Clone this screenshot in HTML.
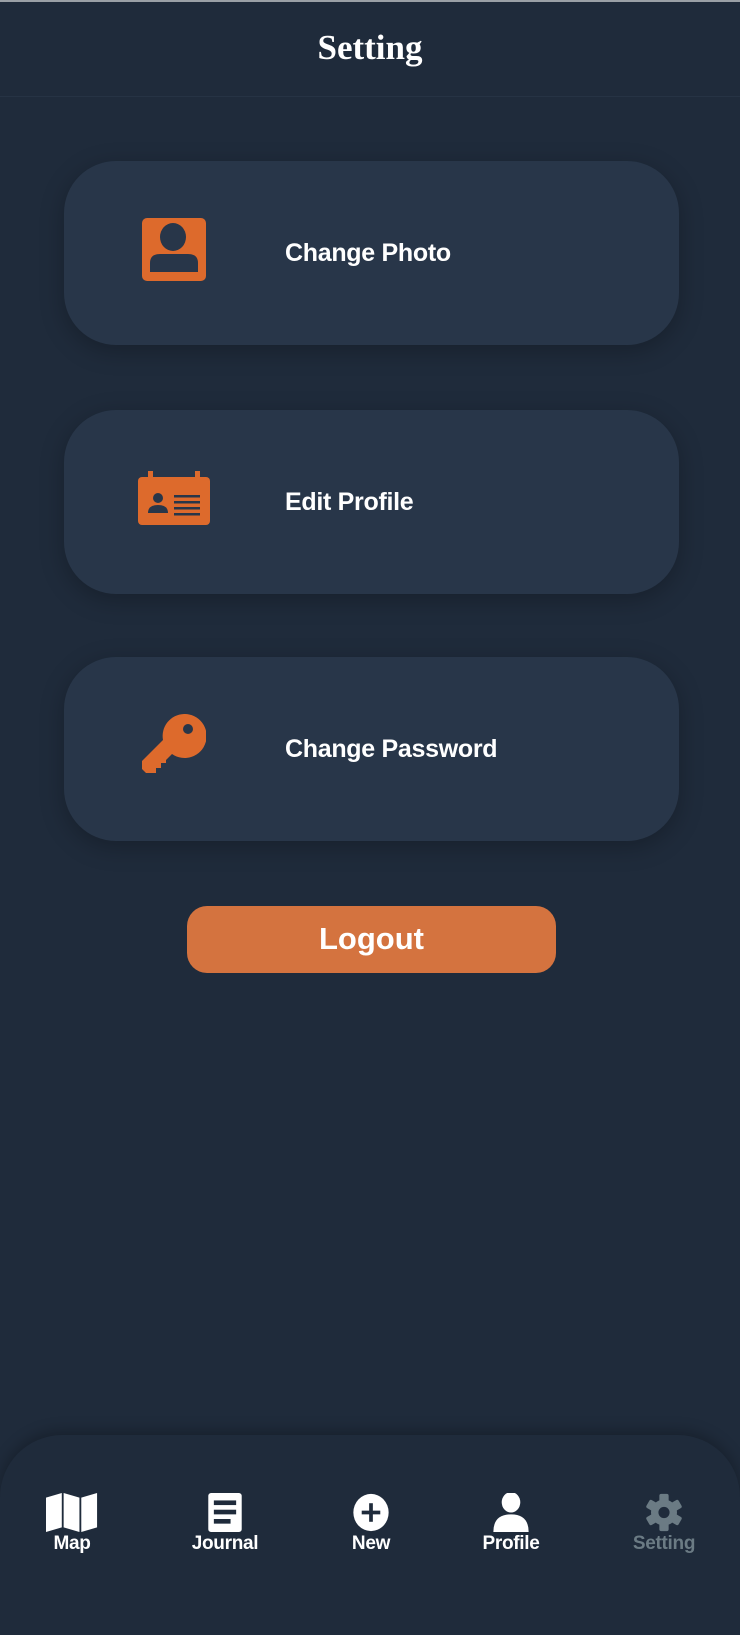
<!DOCTYPE html>
<html><head><meta charset="utf-8"><style>
*{margin:0;padding:0;box-sizing:border-box}
body{width:740px;height:1608px;background:#1f2b3b;font-family:"Liberation Sans",sans-serif;position:relative;overflow:hidden;color:#fff}
.top{position:absolute;left:0;top:0;width:740px;height:2px;background:#9aa0a6}
.hdr{position:absolute;left:0;top:2px;width:740px;height:95px;border-bottom:1px solid #263344;text-align:center;font-family:"Liberation Serif",serif;font-weight:bold;font-size:35px;line-height:92px}
.card{position:absolute;left:64px;width:615px;height:184px;background:#283649;border-radius:52px;box-shadow:0 6px 24px rgba(0,0,0,.25)}
.card .t{position:absolute;left:221px;top:0;line-height:184px;font-weight:bold;font-size:25px;letter-spacing:-0.3px}
.card svg{position:absolute}
.logout{position:absolute;left:187px;top:906px;width:369px;height:67px;background:#d4733f;border-radius:20px;text-align:center;line-height:66px;font-weight:bold;font-size:31px}
.nav{position:absolute;left:0;top:1435px;width:740px;height:200px;border-radius:62px 62px 0 0;background:#1f2b3b;box-shadow:0 -4px 14px rgba(0,0,0,.25)}
.it{position:absolute;top:58px;width:120px;margin-left:-60px;text-align:center;font-weight:bold;font-size:19px}
.it svg{display:block;margin:0 auto 0}
.it span{display:block;line-height:18px;margin-top:3px;letter-spacing:-0.3px}
</style></head><body>
<div class="top"></div>
<div class="hdr">Setting</div>

<div class="card" style="top:161px">
<svg style="left:78px;top:57px" width="64" height="63" viewBox="0 0 64 63"><rect width="64" height="63" rx="5" fill="#dd6a2c"/><ellipse cx="31" cy="19" rx="13" ry="14" fill="#283649"/><path d="M8 54v-9q0-9 10-9h28q10 0 10 9v9z" fill="#283649"/></svg>
<div class="t">Change Photo</div></div>

<div class="card" style="top:410px">
<svg style="left:74px;top:61px" width="72" height="54" viewBox="0 0 72 54"><rect x="10" y="0" width="5" height="10" fill="#dd6a2c"/><rect x="57" y="0" width="5" height="10" fill="#dd6a2c"/><rect y="6" width="72" height="48" rx="4" fill="#dd6a2c"/><circle cx="20" cy="27" r="5" fill="#283649"/><path d="M10 42q0-8 10-8t10 8z" fill="#283649"/><rect x="36" y="24" width="26" height="2.5" fill="#283649"/><rect x="36" y="30" width="26" height="2.5" fill="#283649"/><rect x="36" y="36" width="26" height="2.5" fill="#283649"/><rect x="36" y="42" width="26" height="2.5" fill="#283649"/></svg>
<div class="t">Edit Profile</div></div>

<div class="card" style="top:657px">
<svg style="left:78px;top:57px" width="64" height="64" viewBox="0 0 64 64"><path d="M42 0a22 22 0 1 1-12 40l-6 6v3h-5v5h-5v5H4l-4-4v-8l21-21A22 22 0 0 1 42 0z" fill="#dd6a2c"/><circle cx="46" cy="15" r="5" fill="#283649"/></svg>
<div class="t">Change Password</div></div>

<div class="logout">Logout</div>

<div class="nav">
<div class="it" style="left:72px"><svg width="54" height="39" viewBox="0 0 56 42"><path d="M0 5l17-5v37L0 42zM19 0l17 5v37l-17-5zM38 5l17-5v37l-17 5z" fill="#fff"/></svg><span>Map</span></div>
<div class="it" style="left:225px"><svg width="36" height="39" viewBox="0 0 36 42"><rect width="36" height="42" rx="3" fill="#fff"/><rect x="6" y="8" width="24" height="5" fill="#1f2b3b"/><rect x="6" y="18" width="24" height="5" fill="#1f2b3b"/><rect x="6" y="28" width="18" height="5" fill="#1f2b3b"/></svg><span>Journal</span></div>
<div class="it" style="left:371px"><svg width="38" height="39" viewBox="0 0 40 42"><ellipse cx="20" cy="21" rx="19" ry="20" fill="#fff"/><rect x="18" y="11" width="4" height="20" fill="#1f2b3b"/><rect x="10" y="19" width="20" height="4" fill="#1f2b3b"/></svg><span>New</span></div>
<div class="it" style="left:511px"><svg width="40" height="39" viewBox="0 0 40 42"><ellipse cx="20" cy="10" rx="10" ry="11" fill="#fff"/><path d="M1 42q0-19 19-19t19 19z" fill="#fff"/></svg><span>Profile</span></div>
<div class="it" style="left:664px;color:#6b7b84"><svg width="38" height="39" viewBox="-20 -21 40 42"><g fill="#6b7b84"><circle r="14"/><rect x="-5" y="-20" width="10" height="40" rx="2"/><rect x="-5" y="-20" width="10" height="40" rx="2" transform="rotate(60)"/><rect x="-5" y="-20" width="10" height="40" rx="2" transform="rotate(-60)"/></g><circle r="6" fill="#1f2b3b"/></svg><span>Setting</span></div>
</div>
</body></html>
